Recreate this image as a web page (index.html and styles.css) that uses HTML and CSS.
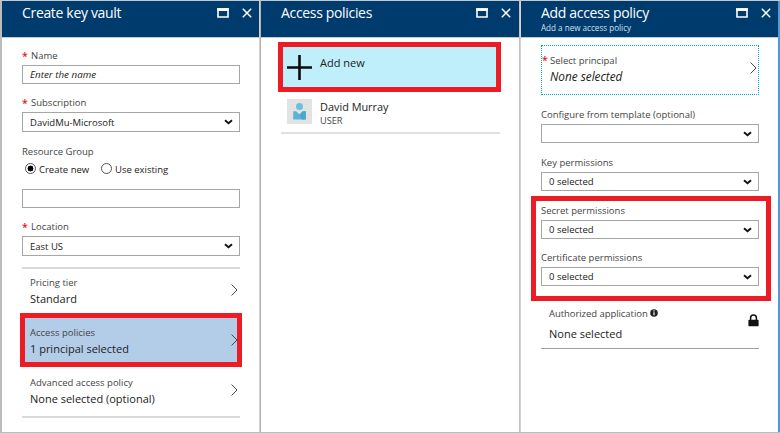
FILE: index.html
```html
<!DOCTYPE html>
<html lang="en">
<head>
<meta charset="utf-8">
<title>Create key vault</title>
<link rel="stylesheet" href="styles.css">
</head>
<body>
<svg class="defs" aria-hidden="true">
  <symbol id="max" viewBox="0 0 12 10"><path d="M1 1h10v8H1z" fill="none" stroke="#fff" stroke-width="1.6"/><path d="M.2.2h11.6V3H.2z" fill="#fff"/></symbol>
  <symbol id="close" viewBox="0 0 10 10"><path d="M.8.8l8.4 8.4M9.2.8L.8 9.2" stroke="#fff" stroke-width="1.5" fill="none"/></symbol>
  <symbol id="down" viewBox="0 0 9 6"><path d="M1 1.2l3.5 3L8 1.2" stroke="#111" stroke-width="1.9" fill="none"/></symbol>
  <symbol id="right" viewBox="0 0 7 12"><path d="M.6.5L6 6 .6 11.5" stroke="#444" stroke-width="1" fill="none"/></symbol>
</svg>
<main class="portal">
  <section class="blade first">
    <header><div><h1>Create key vault</h1></div><svg class="max"><use href="#max"/></svg><svg class="close"><use href="#close"/></svg></header>
    <div class="body">
      <label class="req t-name">Name</label>
      <div class="control name"><i>Enter the name</i></div>
      <label class="req t-sub">Subscription</label>
      <div class="control select"><span>DavidMu-Microsoft</span><svg class="down"><use href="#down"/></svg></div>
      <label class="t-group">Resource Group</label>
      <div class="radios"><span class="radio on"></span><span class="create">Create new</span><span class="radio"></span><span>Use existing</span></div>
      <div class="control group"></div>
      <label class="req t-loc">Location</label>
      <div class="control select"><span>East US</span><svg class="down"><use href="#down"/></svg></div>
      <div class="picker pricing"><div><small>Pricing tier</small><p>Standard</p></div><svg class="right"><use href="#right"/></svg></div>
      <div class="picker marked"><div><small>Access policies</small><p>1 principal selected</p></div><svg class="right"><use href="#right"/></svg></div>
      <div class="picker advanced"><div><small>Advanced access policy</small><p>None selected (optional)</p></div><svg class="right"><use href="#right"/></svg></div>
    </div>
  </section>
  <section class="blade second">
    <header><div><h1>Access policies</h1></div><svg class="max"><use href="#max"/></svg><svg class="close"><use href="#close"/></svg></header>
    <div class="body">
      <div class="add"><svg class="tile" viewBox="0 0 25 25"><path d="M0 12.5h25M12.5 0v25" stroke="#0b0b0b" stroke-width="2.6"/></svg><p>Add new</p></div>
      <div class="user"><svg class="tile" viewBox="0 0 25 25"><path d="M0 0h25v25H0z" fill="#e2e2e2"/><circle cx="12.5" cy="7.6" r="3.5" fill="#6abfe0"/><path d="M6.2 12.2h3l3.3 3.4 3.3-3.4h3v8.3H6.2z" fill="#59b4d9"/><path d="M12.5 15.6l3.3-3.4h3v8.3h-4z" fill="#4aa8d0"/></svg><div><p>David Murray</p><small>USER</small></div></div>
    </div>
  </section>
  <section class="blade third">
    <header><div><h1>Add access policy</h1><h2>Add a new access policy</h2></div><svg class="max"><use href="#max"/></svg><svg class="close"><use href="#close"/></svg></header>
    <div class="body">
      <div class="principal"><div><small>Select principal</small><p><i>None selected</i></p></div><svg class="right"><use href="#right"/></svg></div>
      <label class="t-conf">Configure from template (optional)</label>
      <div class="control select"><span></span><svg class="down"><use href="#down"/></svg></div>
      <label class="t-key">Key permissions</label>
      <div class="control select"><span>0 selected</span><svg class="down"><use href="#down"/></svg></div>
      <div class="permissions">
        <label class="t-secret">Secret permissions</label>
        <div class="control select"><span>0 selected</span><svg class="down"><use href="#down"/></svg></div>
        <label class="t-cert">Certificate permissions</label>
        <div class="control select"><span>0 selected</span><svg class="down"><use href="#down"/></svg></div>
      </div>
      <div class="application"><div><small>Authorized application <svg class="info" viewBox="0 0 8 8"><circle cx="4" cy="4" r="3.8" fill="#222"/><path d="M4 1.3v1.2M4 3.3v3" stroke="#fff" stroke-width="1.2"/></svg></small><p>None selected</p></div><svg class="lock" viewBox="0 0 11 13"><path d="M2.6 6V4a2.9 2.9 0 0 1 5.8 0v2" fill="none" stroke="#111" stroke-width="1.5"/><rect x=".4" y="5.8" width="10.2" height="6.4" rx=".8" fill="#111"/></svg></div>
    </div>
  </section>
</main>
</body>
</html>
```
FILE: styles.css
```css
* { box-sizing: border-box; }
body { margin: 0; background: #fff; color: #222; font-family: "Open Sans", "Noto Sans", sans-serif; overflow: hidden; }
h1, h2, p { margin: 0; font-weight: 400; }
svg { display: block; flex: none; }
.defs { position: absolute; width: 0; height: 0; }
.portal { display: grid; grid-template-columns: 260px 260px 260px; width: 780px; height: 433px; border-top: 1px solid #c3c9cd; border-bottom: 1px solid #bdbdbd; }
.blade { min-width: 0; border-left: 1px solid #b3b3b3; }
.first { border-left: 2px solid #bcbcbc; border-right: 1px solid #d0d0d0; }
.second { border-right: 1px solid #c2c2c2; }
.third { border-left-color: #d3d3d3; border-right: 2px solid #4c9be0; }

header { display: flex; height: 37px; background: #003b6d; border-bottom: 1px solid #b9cbdf; color: #fff; padding-left: 20px; }
header > div { flex: 1; }
h1 { margin-top: 3px; font-size: 14px; line-height: 18px; letter-spacing: -0.33px; white-space: nowrap; }
h2 { margin-top: 0; font-size: 8.1px; line-height: 11px; color: #d5e0ea; white-space: nowrap; }
.max { width: 12px; height: 10px; margin: 7px 13px 0 0; }
.close { width: 10px; height: 10px; margin: 7px 7px 0 0; }
.second .close { margin-right: 8px; }

.body { padding: 0 19px 0 20px; }
label, small { display: block; font-size: 9.5px; line-height: 14px; color: #444; white-space: nowrap; }
p { font-size: 11px; line-height: 16px; white-space: nowrap; }
.req { position: relative; padding-left: 9px; }
.req::before, .principal::before { content: "*"; position: absolute; left: 0; top: 0; color: #e81123; font-size: 10.5px; font-weight: 600; }
.control { display: flex; align-items: center; height: 20px; margin-top: 2px; padding: 0 6px 0 7px; border: 1px solid #a6a6a6; font-size: 9.5px; }
.control i { font-size: 9.8px; }
.control span { flex: 1; white-space: nowrap; }
.down { width: 9px; height: 6px; }
.right { width: 7px; height: 12px; }
.t-name { margin-top: 11px; }
.name, .group, .third .control { height: 19px; }
.t-sub { margin-top: 12px; }
.t-group { margin-top: 13px; }
.radios { display: flex; align-items: center; height: 14px; margin-top: 3px; padding-left: 3px; font-size: 9.5px; white-space: nowrap; }
.radio { width: 11px; height: 11px; margin: -1px 3px 0 0; border: 1px solid #555; border-radius: 50%; }
.on { background: radial-gradient(circle, #000 0 2.7px, #fff 3.2px); }
.create { width: 62px; }
.group { margin-top: 13px; }
.t-loc { margin-top: 12px; }

.picker { display: flex; align-items: center; justify-content: space-between; }
.picker p { margin-top: 1px; }
.pricing { height: 46px; margin-top: 11px; padding: 0 2px 0 8px; border-top: 2px solid #dadada; }
.pricing .right { margin-top: -2px; }
.marked { height: 54px; margin: 0 -2px; padding: 2px 0 0 5px; border: 5px solid #ed1c24; background: #b3cde8; }
.marked .right { margin: -3px -1px 0 0; }
.advanced { height: 51px; padding: 0 2px 0 8px; border-bottom: 2px solid #dadada; }
.advanced .right { margin-top: -4px; }

.add { display: flex; height: 50px; margin: 4px -1px 0 -3px; padding: 8px 0 0 4px; border: 5px solid #ed1c24; background: #bfeffb; }
.tile { width: 25px; height: 25px; margin-right: 8px; }
.user { display: flex; height: 42px; padding: 7px 0 0 6px; border-bottom: 2px solid #e0e0e0; }
.user p { font-size: 10.9px; }
.user small { margin-top: -1px; font-size: 9.2px; }

.principal { position: relative; display: flex; align-items: center; justify-content: space-between; height: 50px; margin-top: 7px; padding: 0 1px 0 8px; border: 1px dotted #00abec; }
.principal::before { top: 7px; }
.principal .right { margin-top: -4px; }
.principal > div { margin-top: -2px; }
.principal p { font-size: 11.8px; }
.t-conf { margin-top: 13px; }
.t-key { margin-top: 13px; }
.permissions { height: 105px; margin: 5px -12px 0 -10px; padding: 3px 7px 0 5px; border: 5px solid #ed1c24; }
.t-cert { margin-top: 12px; }
.application { display: flex; justify-content: space-between; height: 48px; padding: 6px 0 0 8px; border-bottom: 1px solid #a0a0a0; }
.application small { letter-spacing: -0.06px; }
.application p { margin-top: 5px; }
.info { display: inline-block; width: 8px; height: 8px; }
.lock { width: 11px; height: 13px; margin-top: 7px; }
```
